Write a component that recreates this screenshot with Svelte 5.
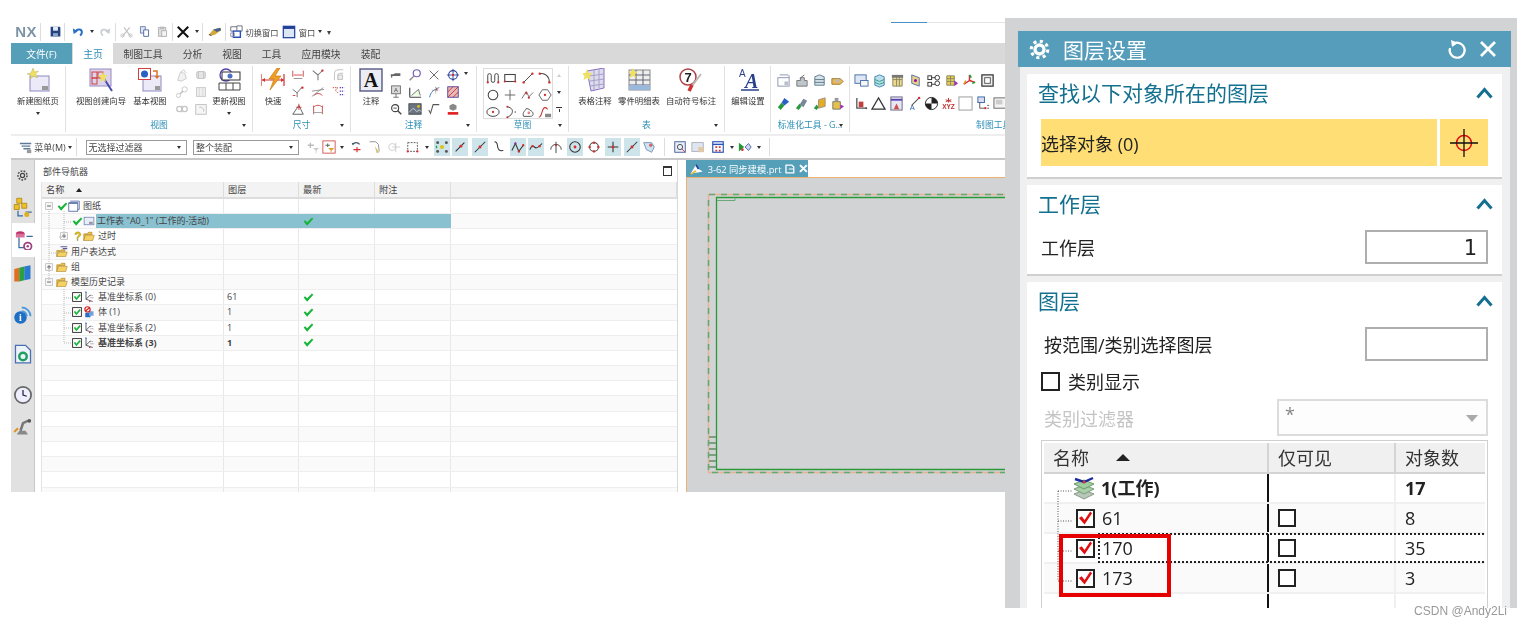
<script>
  // Small icons live on a 16 unit box, big ribbon icons on a 24 unit box
  const icons = {
    save: '<path d="M2 2h11l1 1v11H2z" fill="#24427e"/><rect x="5" y="2" width="6" height="5" fill="#e4eaf4"/><rect x="5" y="10" width="6" height="4" fill="#8fa6cc"/>',
    undo: '<path d="M4 8c3-4 9-3 8 2-.3 1-1 2-2 3" fill="none" stroke="#2a6fc4" stroke-width="2.4"/><path d="M1 4l1 7 5-3z" fill="#2a6fc4"/>',
    redo: '<path d="M12 8C9 4 3 5 4 10c.3 1 1 2 2 3" fill="none" stroke="#c4ccd0" stroke-width="2"/><path d="M15 4l-1 7-5-3z" fill="#c4ccd0"/>',
    cut: '<path d="M3 14L12 3M13 14L5 3" stroke="#c2c2c2" stroke-width="1.4" fill="none"/><circle cx="3" cy="13" r="2" fill="none" stroke="#bbb"/><circle cx="13" cy="13" r="2" fill="none" stroke="#bbb"/>',
    copy: '<path d="M3 2h6v8H3z" fill="#dfe6f5" stroke="#5a6fa8"/><path d="M7 6h6v8H7z" fill="#fff" stroke="#3d5596"/>',
    paste: '<path d="M3 3h9v11H3z" fill="#ddd" stroke="#aaa"/><path d="M7 7h6v7H7z" fill="#f4f4f4" stroke="#aaa"/><path d="M5 2h5v3H5z" fill="#bbb"/>',
    del: '<path d="M2 2l12 12M14 2L2 14" stroke="#111" stroke-width="2.4"/>',
    pen: '<path d="M1 11l5-6 8-2 1 3-7 5-4 1z" fill="#d4a93a"/><path d="M6 5l8-2 1 3-5 2z" fill="#46608f"/><path d="M1 11l3 1" stroke="#333"/>',
    swin: '<path d="M2 2h8v5H2z" fill="#fff" stroke="#667"/><path d="M9 1h6v6H9z" fill="#fff" stroke="#667"/><path d="M5 7h8v7H5z" fill="#fff" stroke="#2452b8" stroke-width="1.6"/><path d="M2 9h4v4H2z" fill="none" stroke="#889"/>',
    win: '<rect x="1.5" y="1.5" width="13" height="13" fill="#dbe7f5" stroke="#1f3f9a" stroke-width="1.4"/><rect x="1.5" y="1.5" width="13" height="3" fill="#1f3f9a"/>',
    menu: '<path d="M1 4h13M3 7h10M5 10h8" stroke="#5c7a9a" stroke-width="1.6"/><path d="M9 11h5v4H9z" fill="#999"/>',
    filt1: '<path d="M2 6h7M5 3v6" stroke="#bbb" stroke-width="1.5"/><path d="M8 9h7l-3 3v3h-1v-3z" fill="#ccc"/>',
    filt2: '<rect x="1" y="1" width="14" height="14" fill="#fff" stroke="#d04a4a"/><path d="M4 6h5M6.5 4v4" stroke="#666" stroke-width="1.2"/><path d="M7 9h7l-3 3v2h-1v-2z" fill="#e0a030"/>',
    t1: '<path d="M3 5a5 5 0 0 1 8 0" stroke="#456" fill="none" stroke-width="1.3"/><path d="M8 8v6M4 11h8" stroke="#d03030" stroke-width="1.3"/><path d="M2 3l1 3 2-2z" fill="#456"/>',
    t2: '<path d="M3 2h7l3 3 1 8" stroke="#888" fill="none"/><path d="M9 7l5 7-3 1z" fill="#d8c070"/>',
    t3: '<circle cx="6" cy="8" r="4" fill="none" stroke="#ccc"/><path d="M10 3v11M6 8h9" stroke="#ccc"/>',
    t4: '<rect x="2" y="3" width="11" height="10" fill="none" stroke="#444" stroke-dasharray="2 1.4"/><circle cx="2" cy="13" r="1.3" fill="#d03030"/><circle cx="13" cy="13" r="1.3" fill="#d03030"/>',
    dots: '<circle cx="8" cy="8" r="2.4" fill="#e0c020"/><circle cx="3" cy="3" r="1.7" fill="#555"/><circle cx="13" cy="3" r="1.7" fill="#555"/><circle cx="3" cy="13" r="1.7" fill="#555"/><circle cx="13" cy="13" r="1.7" fill="#555"/><path d="M1 6l2 2-2 2z" fill="#1a9a30"/>',
    line: '<path d="M3 13L13 3" stroke="#333" stroke-width="1.2"/><circle cx="9" cy="7" r="1.7" fill="#d03030"/>',
    lin2: '<path d="M2 14L14 2" stroke="#333" stroke-width="1.2"/><circle cx="8" cy="8" r="1.7" fill="#d03030"/>',
    curv: '<path d="M4 2c5 0 2 6 5 9 2 2 4 1 5 1" fill="none" stroke="#333" stroke-width="1.2"/>',
    wave: '<path d="M1 12L5 4l4 9 5-7" fill="none" stroke="#333" stroke-width="1.2"/><circle cx="5" cy="4" r="1.4" fill="#8a3ab0"/><circle cx="9" cy="13" r="1.4" fill="#d03030"/><circle cx="14" cy="6" r="1.3" fill="#d03030"/>',
    wav2: '<path d="M1 11c3-8 5-2 7-2s4-2 7-5" fill="none" stroke="#333" stroke-width="1.2"/><circle cx="4" cy="7" r="1.4" fill="#d03030"/><circle cx="12" cy="7" r="1.4" fill="#d03030"/>',
    umb: '<path d="M2 11a6 6 0 0 1 12 0M8 2v13" fill="none" stroke="#444" stroke-width="1.1"/><circle cx="8" cy="6" r="1.2" fill="#d03030"/>',
    rad: '<circle cx="8" cy="8" r="6" fill="none" stroke="#333" stroke-width="1.2"/><circle cx="8" cy="8" r="1.6" fill="#d03030"/>',
    ring: '<circle cx="8" cy="8" r="5" fill="none" stroke="#555" stroke-width="1.2"/><circle cx="8" cy="3" r="1.4" fill="#d03030"/><circle cx="3" cy="8" r="1.4" fill="#d03030"/><circle cx="13" cy="8" r="1.4" fill="#d03030"/><circle cx="8" cy="13" r="1.4" fill="#d03030"/>',
    plus: '<path d="M8 2v12M2 8h12" stroke="#333" stroke-width="1.2"/><circle cx="8" cy="8" r="1.6" fill="#d03030"/>',
    shap: '<path d="M2 3h9l3 5-3 6-6-3z" fill="#cfe3f2" stroke="#6b8fb0"/><circle cx="10" cy="6" r="2" fill="#d06a6a"/>',
    zoom: '<rect x="2" y="2" width="12" height="12" fill="#e8eef8" stroke="#3d5596"/><circle cx="8" cy="8" r="3" fill="none" stroke="#444"/><path d="M10 10l4 4" stroke="#d03030"/>',
    hand: '<rect x="1" y="3" width="13" height="10" fill="#dfe6f2" stroke="#aab"/><path d="M8 8h6v6H9z" fill="#e4c9a0"/>',
    grid: '<rect x="2" y="2" width="12" height="12" fill="#fff" stroke="#2452b8" stroke-width="1.3"/><path d="M2 5h12" stroke="#2452b8" stroke-width="1.6"/><path d="M5 7h2v2H5zM9 7h2v2H9zM5 11h2v2H5zM9 11h2v2H9z" fill="#d03030"/>',
    dia: '<path d="M8 8l4-4 3 4-3 4z" fill="#cdd6ee" stroke="#4a5fa8"/><path d="M1 3v10l6-5z" fill="#1a9a30"/><circle cx="5" cy="11" r="1.5" fill="#d03030"/>',

    g1: '<path d="M3 14l3-9 5 1 2 6-6 3z" fill="#f2f2f2" stroke="#c8c8c8"/><path d="M6 5l4-3 3 4" fill="none" stroke="#c8c8c8"/>',
    g2: '<rect x="3" y="4" width="10" height="8" rx="2" fill="#e4e4e4" stroke="#c0c0c0"/><path d="M5 4v8M11 4v8" stroke="#c0c0c0"/>',
    g3: '<circle cx="4" cy="12" r="2.4" fill="none" stroke="#c4c4c4"/><circle cx="11" cy="5" r="3" fill="none" stroke="#c4c4c4"/><path d="M6 10l3-3" stroke="#c4c4c4" stroke-width="2"/>',
    g4: '<rect x="3" y="3" width="10" height="10" fill="#f0f0f0" stroke="#c4c4c4"/><path d="M6 3v10M10 3v10" stroke="#d8d8d8"/>',
    g5: '<circle cx="5" cy="8" r="3" fill="none" stroke="#c4c4c4" stroke-width="1.4"/><circle cx="11" cy="8" r="3" fill="none" stroke="#c4c4c4" stroke-width="1.4"/><path d="M8 4v8" stroke="#c4c4c4"/>',
    g6: '<rect x="2" y="3" width="12" height="11" fill="#f6f6f6" stroke="#bbb"/><path d="M6 6a4 4 0 0 1 5 5" fill="none" stroke="#bbb"/>',

    d1: '<path d="M2 3v7M14 3v7M3 8h10" stroke="#c94040" fill="none"/><path d="M3 12h10" stroke="#8a8a8a"/>',
    d2: '<path d="M2 3l6 5v6M14 2L8 8" stroke="#777" fill="none" stroke-width="1.2"/><circle cx="13" cy="3" r="1.3" fill="#d03030"/>',
    d3: '<path d="M4 14V6a4 4 0 0 1 4-4h6M8 14V8a2 2 0 0 1 2-2h4" stroke="#bbb" fill="none"/><rect x="8" y="8" width="5" height="5" fill="#eee" stroke="#bbb"/>',
    d4: '<path d="M2 5l5 4v5M12 3L7 9" stroke="#666" fill="none"/><circle cx="13" cy="3" r="1.4" fill="#d03030"/><path d="M2 12h3" stroke="#d03030"/>',
    d5: '<path d="M1 7l14-2M1 13L14 3" stroke="#888" fill="none"/><path d="M4 12c2-3 6-3 9 0" stroke="#d03030" fill="none"/>',
    d6: '<path d="M2 3h6l-3 3 3 3" stroke="#d03030" fill="none" stroke-dasharray="1.6 1"/><path d="M10 3h5M10 7h5M10 11h5" stroke="#5a40b0" stroke-dasharray="1.4 1" stroke-width="1.4"/>',
    d7: '<path d="M2 14h12L9 4z" fill="none" stroke="#555"/><path d="M9 2v7M6 6h6" stroke="#d03030"/>',
    d8: '<path d="M3 14V4M13 14V4M3 6c3-3 7-3 10 0" stroke="#c94040" fill="none"/><path d="M3 12h10" stroke="#999"/>',

    n1: '<path d="M2 7h3l2-1h6v3H2z" fill="#666"/><path d="M3 9v2" stroke="#666" stroke-width="1.5"/>',
    n2: '<circle cx="10" cy="6" r="4" fill="#fff" stroke="#7b5fc0" stroke-width="1.4"/><path d="M7 9l-5 5" stroke="#888" stroke-width="1.6"/>',
    n3: '<path d="M3 3l10 10M13 3L3 13" stroke="#666" stroke-width="1.1"/>',
    n4: '<circle cx="8" cy="8" r="5" fill="none" stroke="#2a3f9a" stroke-width="1.2"/><path d="M8 1v14M1 8h14" stroke="#2a3f9a"/><circle cx="8" cy="8" r="1.3" fill="#d03030"/>',
    n5: '<rect x="3" y="1" width="10" height="9" fill="#ddd" stroke="#666"/><text x="8" y="8" font-size="7" text-anchor="middle" fill="#444">A</text><path d="M8 10v4M5 14h6" stroke="#666"/>',
    n6: '<path d="M2 14V3M2 14h13" stroke="#444" stroke-width="1.3"/><path d="M4 12l8-7 2 7" fill="#cfa" fill-opacity=".4" stroke="#666"/>',
    n7: '<path d="M3 14c1-6 5-9 11-11" stroke="#2a6fc4" fill="none"/><path d="M10 2v8M6 6h8" stroke="#888" stroke-dasharray="1.5 1"/><circle cx="11" cy="5" r="1" fill="#d03030"/>',
    n8: '<rect x="2" y="2" width="12" height="12" fill="#e9b8b8" stroke="#4a3f9a"/><path d="M2 8l6-6M2 14L14 2M8 14l6-6" stroke="#c03030"/>',
    n9: '<circle cx="7" cy="7" r="4" fill="none" stroke="#444" stroke-width="1.3"/><path d="M10 10l4 4" stroke="#444" stroke-width="1.6"/><path d="M5 7h4" stroke="#444"/>',
    n10: '<rect x="1" y="2" width="14" height="12" fill="#6b7480" stroke="#444"/><path d="M1 12l5-5 4 4 3-2 2 2" fill="none" stroke="#cdd"/><circle cx="12" cy="5" r="1.5" fill="#f0c020"/>',
    n11: '<path d="M2 9l2 4 3-10h7" fill="none" stroke="#555" stroke-width="1.2"/>',
    n12: '<path d="M4 4l4-2 4 2v4l-4 2-4-2z" fill="#888"/><path d="M2 13h12" stroke="#e02020" stroke-width="3"/>',

    s1: '<path d="M2 13V5a2 2 0 0 1 4 0v6a2 2 0 0 0 4 0V5a2 2 0 0 1 4 0v8" fill="none" stroke="#444" stroke-width="1.1"/><circle cx="2" cy="13" r="1.3" fill="#d03030"/><circle cx="14" cy="13" r="1.3" fill="#d03030"/>',
    s2: '<rect x="2" y="4" width="12" height="8" fill="none" stroke="#444" stroke-width="1.2"/><circle cx="2" cy="12" r="1.2" fill="#d03030"/><circle cx="14" cy="12" r="1.2" fill="#d03030"/>',
    s3: '<path d="M3 13L13 3" stroke="#444" stroke-width="1.1"/><circle cx="3" cy="13" r="1.4" fill="#d03030"/><circle cx="13" cy="3" r="1.4" fill="#d03030"/>',
    s4: '<path d="M2 3c6-1 11 3 11 10" fill="none" stroke="#444" stroke-width="1.2"/><circle cx="2" cy="3" r="1.4" fill="#d03030"/><circle cx="13" cy="13" r="1.4" fill="#d03030"/>',
    s5: '<circle cx="8" cy="8" r="5.5" fill="none" stroke="#444" stroke-width="1.2"/>',
    s6: '<path d="M8 2v12M2 8h12" stroke="#666" stroke-width="1.1"/>',
    s7: '<path d="M1 12l5-8 3 6 5-5" fill="none" stroke="#666"/><circle cx="6" cy="6" r="1.3" fill="#d03030"/><circle cx="9" cy="11" r="1.3" fill="#d03030"/>',
    s8: '<path d="M5 2h6l4 6-4 6H5L1 8z" fill="none" stroke="#555"/><circle cx="8" cy="8" r="1.3" fill="#d03030"/>',
    s9: '<ellipse cx="8" cy="8" rx="7" ry="5" fill="none" stroke="#444" stroke-width="1.1"/><circle cx="8" cy="8" r="1.3" fill="#d03030"/>',
    s10: '<path d="M5 2c5 1 7 4 5 8-1 2-3 3-5 4" fill="none" stroke="#444" stroke-width="1.1"/><circle cx="5" cy="2" r="1.2" fill="#d03030"/><circle cx="5" cy="14" r="1.2" fill="#d03030"/><circle cx="14" cy="8" r=".9" fill="#555"/>',
    s11: '<path d="M3 13c-2-5 2-6 3-9 3 0 4 2 6 3 3 2 2 6-1 6z" fill="none" stroke="#555" stroke-width="1.1"/><circle cx="9" cy="9" r="1.6" fill="#d88"/>',
    s12: '<path d="M1 14c4 0 3-11 7-11 2 0 2 1 3 2" fill="none" stroke="#c03030" stroke-width="1.2"/><path d="M8 10h7v4H8z" fill="#888"/>',

    b1: '<rect x="2" y="5" width="12" height="9" fill="#fff" stroke="#8a93b0"/><path d="M4 2h9l1 1v2" fill="none" stroke="#8a93b0"/><path d="M9 9h4v4H9z" fill="#bbc"/>',
    b2: '<path d="M3 8h4V5h4v3h3v6H3z" fill="#bfc6cc" stroke="#777"/><path d="M6 6l5-4" stroke="#666"/>',
    b3: '<path d="M3 4l5-2 5 2v9H3z" fill="#d8e2ea" stroke="#5a7a88"/><path d="M3 7h10M3 10h10" stroke="#5a7a88"/>',
    b4: '<rect x="3" y="2" width="10" height="12" fill="#d8d8f0" stroke="#5a7a88"/><path d="M3 6h10M3 10h10" stroke="#3aa0a0"/>',
    b5: '<path d="M2 6h9l3 3-3 3H2z" fill="#e6b85c" stroke="#a07c2c"/><circle cx="8" cy="8" r="2" fill="#bbb"/>',
    b6: '<path d="M2 12l4-5 3 3-4 5z" fill="#2a9a40"/><path d="M6 7l3-5 5 4-5 4z" fill="#2a5fc4"/>',
    b7: '<path d="M2 13l4-5 2 3-3 4z" fill="#2a9a40"/><path d="M6 9l4-6 4 2-4 7z" fill="#789"/>',
    b8: '<path d="M2 13l3-4 2 3-2 3z" fill="#2a9a40"/><path d="M7 4l7-2v9l-7 2z" fill="#e0b020" stroke="#a88"/>',
    b9: '<path d="M3 6h8v8H3z" fill="#e6c04c" stroke="#776"/><path d="M5 2h4v4H5z" fill="#999"/><path d="M11 9l4 2-4 3z" fill="#a030c0"/>',
    c1: '<rect x="1" y="2" width="12" height="9" fill="#dde7f5" stroke="#4a6fa8"/><rect x="7" y="8" width="8" height="6" fill="#f6f6f6" stroke="#4a6fa8"/>',
    c2: '<path d="M3 4l5-2 5 2v9l-5 2-5-2z" fill="#bde" stroke="#48a"/><path d="M3 7l5 2 5-2M3 10l5 2 5-2" fill="none" stroke="#2a9a80"/>',
    c3: '<path d="M3 3h10v11H3z" fill="#eed98a" stroke="#886"/><path d="M3 7h10M7 3v11M10 3v11" stroke="#886"/><path d="M2 2h12v3H2z" fill="#777"/>',
    c4: '<path d="M4 2l8 3v9L4 11z" fill="#e0d488" stroke="#5a6fa8"/><circle cx="8" cy="8" r="1.6" fill="#a0a"/>',
    c5: '<rect x="2" y="3" width="4" height="4" fill="none" stroke="#333"/><rect x="2" y="10" width="4" height="4" fill="none" stroke="#333"/><circle cx="12" cy="5" r="2.5" fill="none" stroke="#333"/><circle cx="12" cy="11" r="2.5" fill="none" stroke="#333"/><path d="M6 5h4M6 12h4" stroke="#333"/>',
    c6: '<path d="M3 3h8v10H3z" fill="#e8cc50" stroke="#886"/><path d="M3 6h8M3 9h8M7 3v10" stroke="#886"/><path d="M11 8l4 3-4 3z" fill="#a030c0"/>',
    c7: '<path d="M8 8V2M8 8l6 2M8 8L2 12" stroke="#d03030" stroke-width="1.6"/><path d="M8 2l2 3M14 10l-3 1" stroke="#1a9a30" stroke-width="1.6"/><path d="M2 12l2-4" stroke="#e09020" stroke-width="1.6"/>',
    c8: '<rect x="2" y="2" width="12" height="12" fill="#eee" stroke="#333" stroke-width="1.3"/><rect x="5" y="5" width="6" height="6" fill="#fff" stroke="#555"/>',
    c9: '<path d="M3 2v11h11" stroke="#555" fill="none" stroke-width="1.4"/><rect x="5" y="6" width="5" height="6" fill="#c04040"/><circle cx="13" cy="13" r="1" fill="#555"/>',
    c10: '<path d="M8 2l7 12H1z" fill="none" stroke="#333" stroke-width="1.3"/>',
    c11: '<rect x="2" y="1" width="12" height="14" fill="#e8e8f2" stroke="#668"/><path d="M2 4h12" stroke="#5a40b0" stroke-width="2"/><path d="M5 14l3-6 3 6z" fill="#d05050"/>',
    c12: '<path d="M6 10l8-8" stroke="#555" stroke-width="1.2"/><circle cx="14" cy="2" r="1.3" fill="#d03030"/><text x="4" y="15" font-size="8" fill="#36a" font-family="Liberation Sans">A</text>',
    c13: '<circle cx="8" cy="8" r="6.5" fill="#fff" stroke="#222"/><path d="M8 1.5A6.500 6.500 0 0 1 14.500 8H8zM8 8v6.500A6.500 6.500 0 0 1 1.500 8z" fill="#222"/>',
    c14: '<text x="8" y="14" font-size="7" font-weight="700" text-anchor="middle" fill="#c03030" font-family="Liberation Sans">XYZ</text><path d="M8 2v5M5 4l6 2M11 4L5 6" stroke="#c03030"/>',
    c15: '<rect x="1" y="1" width="14" height="14" fill="#fff" stroke="#999"/>',
    c16: '<rect x="2" y="1" width="7" height="6" fill="#dde" stroke="#36a"/><path d="M4 7v6h6M12 10h2M12 13h2" stroke="#555" fill="none"/><circle cx="10" cy="13" r="1.2" fill="#d03030"/>',
    c17: '<rect x="1" y="2" width="14" height="11" fill="#f4f4f4" stroke="#666"/><rect x="3" y="4" width="7" height="5" fill="#ccc"/>',

    exOpen: '<rect x="3.500" y="3.500" width="9" height="9" fill="#f6f6f6" stroke="#bbb"/><path d="M5.500 8h5" stroke="#333"/>',
    exClosed: '<rect x="3.500" y="3.500" width="9" height="9" fill="#f6f6f6" stroke="#bbb"/><path d="M5.500 8h5M8 5.500v5" stroke="#333"/>',
    ok: '<path d="M1 8l2-2 3 3 7-7 2 2-9 10z" fill="#18b53a"/>',
    quest: '<path d="M4 5c0-5 9-5 9 0 0 3-4 3-4 6H7c0-4 3-4 3-6 0-2-3-2-3 0z" fill="#e0c020" stroke="#8a7a10" stroke-width=".5"/><rect x="7" y="12" width="2" height="2" fill="#8a7a10"/>',
    sheet: '<rect x="1" y="4" width="12" height="11" fill="#fff" stroke="#5a6fa8" stroke-width="1.2"/><path d="M3 1.500h12v11h-2" fill="none" stroke="#5a6fa8" stroke-width="1.2"/><path d="M1 4h12" stroke="#5a6fa8" stroke-width="2"/>',
    page: '<rect x="1.500" y="3" width="13" height="10" fill="#e8edf8" stroke="#6b7fb0"/><rect x="8" y="9" width="5" height="3" fill="#99a"/>',
    folder: '<path d="M1 5h5l1-2h5v3H4L1 14z" fill="#f0c040" stroke="#a07820" stroke-width=".7"/><path d="M3 7h12l-2 7H1z" fill="#f6d060" stroke="#a07820" stroke-width=".7"/>',
    folderE: '<path d="M6 1h9M9 3.500h6" stroke="#5a5aa0" stroke-width="1.4"/><path d="M1 6h5l1-1h5v2H4L1 14z" fill="#f0c040" stroke="#a07820" stroke-width=".7"/><path d="M3 8h12l-2 6H1z" fill="#f6d060" stroke="#a07820" stroke-width=".7"/>',
    chk: '<rect x="1" y="1" width="14" height="14" fill="#fff" stroke="#222" stroke-width="1.4"/><path d="M3 8l2-2 2 3 5-6 2 2-7 8z" fill="#18b53a"/>',
    csys: '<path d="M4 2v9l9 3M4 11l6-6" stroke="#445" fill="none" stroke-width="1.1"/><path d="M9 6h4M10 9h4" stroke="#667" stroke-dasharray="1.4 1"/><circle cx="9" cy="14" r="1" fill="#d03030"/><path d="M3 1l2 1" stroke="#2a6fc4" stroke-width="1.4"/>',
    body: '<path d="M3 9h7v6H3z" fill="#2a6fc4"/><path d="M8 7h6v6H8z" fill="#6fa0dc"/><circle cx="6" cy="4.500" r="3.500" fill="#fff" stroke="#d02020" stroke-width="1.6"/><path d="M3 7l6-5" stroke="#d02020" stroke-width="1.6"/>',

    r1: '<circle cx="8" cy="8" r="2.500" fill="none" stroke="#444" stroke-width="1.5"/><circle cx="8" cy="8" r="5.500" fill="none" stroke="#555" stroke-width="2" stroke-dasharray="2.200 1.600"/>',
    r2: '<path d="M3 1h4v4H3zM7 5h4v4H7zM1 6h4v4H1z" fill="#f0c020" stroke="#a88010" stroke-width=".6"/><path d="M4 11v4h4M10 12h5" stroke="#3a6aa0" fill="none"/><circle cx="11" cy="14" r="2" fill="#e0b020"/>',
    r3: '<ellipse cx="5" cy="3" rx="3.500" ry="2" fill="#c0306a"/><rect x="1.500" y="3" width="7" height="3" fill="#d8709a"/><path d="M4 6v8h4M10 5h5" stroke="#3a6aa0" fill="none"/><circle cx="11" cy="13" r="3" fill="none" stroke="#a04080" stroke-width="1.400"/><circle cx="11" cy="13" r="1" fill="#a04080"/>',
    r4: '<path d="M1 4l4-1v11H1z" fill="#e07020"/><path d="M5 3l4-1v11l-4 1z" fill="#2aa040"/><path d="M9 2l5-1v11l-5 1z" fill="#2a7ad0"/>',
    r5: '<circle cx="6" cy="10" r="5" fill="#1f6fc4"/><text x="6" y="13" font-size="8" font-weight="700" text-anchor="middle" fill="#fff" font-family="Liberation Serif">i</text><path d="M7 2a7 7 0 0 1 7 7M7 5a4 4 0 0 1 4 4" fill="none" stroke="#4a9ae0" stroke-width="1.500"/>',
    r6: '<path d="M2 1h8l4 4v10H2z" fill="#eef3fb" stroke="#4a6fb0"/><circle cx="8" cy="10" r="3" fill="none" stroke="#20a060" stroke-width="2"/>',
    r7: '<circle cx="8" cy="8" r="6.500" fill="#eef" stroke="#666" stroke-width="1.400"/><path d="M8 4v4l3 1" stroke="#223" fill="none"/>',
    r8: '<path d="M3 14l2-3h5l2 3z" fill="#888"/><path d="M6 11l2-6 4-2" stroke="#777" stroke-width="2" fill="none"/><circle cx="13" cy="3" r="1.500" fill="#555"/><path d="M1 12l3-3" stroke="#e09020" stroke-width="1.500"/>'
  };

  const bigIcons = {
    sheetNew: '<rect x="4" y="8" width="19" height="15" fill="#eceaf8" stroke="#8a8ac0"/><rect x="16" y="18" width="6" height="4" fill="#999"/><path d="M7 0l1.500 4 4-1-3 3 2 4-4-2-3 3 .5-4-4-1 4-1z" fill="#f0e060" stroke="#b8b060" stroke-width=".5"/>',
    wizard: '<rect x="1" y="1" width="21" height="17" fill="#dcd4ec" stroke="#9a8ac0"/><rect x="3" y="4" width="5" height="6" fill="none" stroke="#d04040"/><rect x="3" y="10" width="5" height="6" fill="none" stroke="#d04040"/><rect x="9" y="4" width="5" height="6" fill="none" stroke="#d04040"/><path d="M14 9l9 14" stroke="#4a4ab0" stroke-width="2"/><path d="M14 3l1 4 4 0-3 3 1 4-3-2-3 2 1-4-3-3 4 0z" fill="#f0e060"/>',
    basic: '<rect x="5" y="8" width="18" height="15" fill="#eceaf8" stroke="#8a8ac0"/><rect x="17" y="18" width="5" height="4" fill="#999"/><rect x="0.500" y="0.500" width="12" height="11" fill="#fff" stroke="#d04040"/><circle cx="6.500" cy="6" r="3.500" fill="#2a5fc4"/><path d="M15 3h4v5" fill="none" stroke="#e07020" stroke-width="1.500"/><path d="M16.500 8h5l-2.500 3z" fill="#e07020"/>',
    update: '<circle cx="9" cy="7" r="6" fill="none" stroke="#5040b0" stroke-width="1.300"/><rect x="5" y="4" width="18" height="8" fill="#fff" stroke="#333"/><circle cx="13" cy="8" r="2.500" fill="#4a6fc4"/><path d="M2 15h21v7H2zM9 15v7M16 15v7" fill="#fff" stroke="#444"/>',
    quick: '<path d="M0 6v12M23 6v12M1 12h22" stroke="#d03030" stroke-width="1.200"/><path d="M1 12l3-2v4zM23 12l-3-2v4z" fill="#d03030"/><path d="M16 0l-8 11h5l-4 11 11-14h-6l5-8z" fill="#f0a020" stroke="#c07010" stroke-width=".6"/>',
    tblNote: '<path d="M4 3l17-3v20l-13 3z" fill="#dcdcec" stroke="#8a70c0"/><path d="M6 8l15-2M7 13l14-2M7 18l14-2M11 2v20M16 1v19" stroke="#a8a0c8"/><path d="M4 1l1.500 4 4 0-3 3 1 4-3.500-2-3.500 2 1-4-3-3 4 0z" fill="#f0e060"/>',
    parts: '<rect x="2" y="2" width="21" height="20" fill="#eee" stroke="#888"/><path d="M2 7h21M2 12h21M2 17h21M9 2v20M16 2v20" stroke="#667"/><rect x="2" y="17" width="21" height="5" fill="#9ab8dc"/><path d="M6 0l1.500 3.500h3.500l-3 2.500 1 4-3-2-3 2 1-4-3-2.500h3.500z" fill="#f0e060"/>',
    auto: '<circle cx="9" cy="9" r="8" fill="#fff" stroke="#b04040" stroke-width="1.500"/><text x="9" y="14" font-size="13" font-weight="700" text-anchor="middle" fill="#222" font-family="Liberation Sans">7</text><path d="M22 6l-9 12" stroke="#bbb" stroke-width="2"/><path d="M13 17l-3 6" stroke="#d03030" stroke-width="3.500"/>',
    edit: '<text x="3" y="9" font-size="10" fill="#2a3f8a" font-family="Liberation Sans">A</text><text x="9" y="20" font-size="20" font-weight="700" font-style="italic" fill="#2a3f8a" font-family="Liberation Serif">A</text><path d="M5 22h18" stroke="#2a3f8a" stroke-width="1.500"/>',
    note: '<rect x="1" y="1" width="22" height="22" fill="#ececf4" stroke="#555a80" stroke-width="1.400"/><text x="12" y="19" font-size="20" font-weight="700" text-anchor="middle" fill="#111" font-family="Liberation Serif">A</text>'
  };

  // Lays items out in flow: each one gets the margin that puts its centre at c
  function strip(items, start) {
    let x = start;
    return items.map((it) => {
      const w = it.w ?? (it.sep ? 1 : it.arrow ? 6 : 16);
      const gap = it.c - w / 2 - x;
      x = it.c + w / 2;
      return { ...it, w, gap };
    });
  }

  const quickBar = strip([
    { c: 26, label: 'NX', nx: true, w: 26 }, { c: 40, sep: true },
    { c: 55, i: 'save', s: 13 }, { c: 64, sep: true },
    { c: 78, i: 'undo', s: 13 }, { c: 92, arrow: true }, { c: 104, i: 'redo', s: 13 }, { c: 115, sep: true },
    { c: 126, i: 'cut', s: 13 }, { c: 144, i: 'copy', s: 13 }, { c: 162, i: 'paste', s: 13 }, { c: 172, sep: true },
    { c: 183, i: 'del', s: 14 }, { c: 197, arrow: true }, { c: 202, sep: true },
    { c: 215, i: 'pen', s: 14 }, { c: 225, sep: true },
    { c: 236, i: 'swin', s: 14 }, { c: 262, label: '切换窗口', w: 34 },
    { c: 289, i: 'win', s: 14 }, { c: 307, label: '窗口', w: 17 }, { c: 320, arrow: true }, { c: 329, label: '▾', w: 6 }
  ], 11);

  const cmdBar = strip([
    { c: 26, i: 'menu' }, { c: 50, label: '菜单(M)', w: 30 }, { c: 70, arrow: true }, { c: 76, sep: true },
    { c: 136, select: '无选择过滤器', w: 101 }, { c: 246, select: '整个装配', w: 106 },
    { c: 313, i: 'filt1' }, { c: 329, i: 'filt2' }, { c: 342, arrow: true },
    { c: 357, i: 't1' }, { c: 374, i: 't2' }, { c: 394, i: 't3' }, { c: 413, i: 't4' }, { c: 427, arrow: true },
    { c: 442, i: 'dots', hl: 1 }, { c: 460, i: 'line', hl: 1 }, { c: 480, i: 'lin2', hl: 1 }, { c: 498, i: 'curv' },
    { c: 518, i: 'wave', hl: 1 }, { c: 536, i: 'wav2', hl: 1 }, { c: 556, i: 'umb' },
    { c: 575, i: 'rad', hl: 1 }, { c: 594, i: 'ring' }, { c: 613, i: 'plus', hl: 1 }, { c: 632, i: 'lin2', hl: 1 },
    { c: 649, i: 'shap' }, { c: 664, sep: true }, { c: 680, i: 'zoom' }, { c: 698, i: 'hand' },
    { c: 718, i: 'grid' }, { c: 732, arrow: true }, { c: 745, i: 'dia' }, { c: 759, arrow: true }, { c: 769, sep: true }
  ], 11);

  const viewSmall = ['g1', 'g2', 'g3', 'g4', 'g5', 'g6'];
  const dimSmall = ['d1', 'd2', 'd3', 'd4', 'd5', 'd6', 'd7', 'd8'];
  const noteSmall = ['n1', 'n2', 'n3', 'n4', 'n5', 'n6', 'n7', 'n8', 'n9', 'n10', 'n11', 'n12'];
  const sketchSmall = ['s1', 's2', 's3', 's4', 's5', 's6', 's7', 's8', 's9', 's10', 's11', 's12'];
  const stdSmall = ['b1', 'b2', 'b3', 'b5', 'b6', 'b7', 'b8', 'b9'];
  const draftTop = ['c1', 'c2', 'c3', 'c4', 'c5', 'c6', 'c7', 'c8'];
  const draftBottom = ['c9', 'c10', 'c11', 'c12', 'c13', 'c14', 'c15', 'c16', 'c17'];

  const railItems = [
    { i: 'r2', h: 32, y: 0 }, { i: 'r3', h: 34, active: true }, { i: 'r4', h: 33 },
    { i: 'r5', h: 50 }, { i: 'r6', h: 28 }, { i: 'r7', h: 54 }, { i: 'r8', h: 10 }
  ];

  const treeRows = [
    { parts: [{ c: 48, i: 'exOpen', w: 12 }, { c: 61, i: 'ok', w: 11 }, { c: 73, i: 'sheet', w: 12 }], x: 82, label: '图纸' },
    { parts: [{ c: 76, i: 'ok', w: 11 }, { c: 88, i: 'page', w: 12 }], x: 96, label: '工作表 "A0_1" (工作的-活动)', sel: true, latest: true },
    { parts: [{ c: 63, i: 'exClosed', w: 12 }, { c: 76, i: 'quest', w: 11 }, { c: 88, i: 'folder', w: 12 }], x: 97, label: '过时' },
    { parts: [{ c: 61, i: 'folderE', w: 12 }], x: 70, label: '用户表达式' },
    { parts: [{ c: 48, i: 'exClosed', w: 12 }, { c: 61, i: 'folder', w: 12 }], x: 70, label: '组' },
    { parts: [{ c: 48, i: 'exOpen', w: 12 }, { c: 61, i: 'folder', w: 12 }], x: 70, label: '模型历史记录' },
    { parts: [{ c: 76, i: 'chk', w: 10 }, { c: 88, i: 'csys', w: 12 }], x: 97, label: '基准坐标系 (0)', layer: '61', latest: true },
    { parts: [{ c: 76, i: 'chk', w: 10 }, { c: 88, i: 'body', w: 12 }], x: 97, label: '体 (1)', layer: '1', latest: true },
    { parts: [{ c: 76, i: 'chk', w: 10 }, { c: 88, i: 'csys', w: 12 }], x: 97, label: '基准坐标系 (2)', layer: '1', latest: true },
    { parts: [{ c: 76, i: 'chk', w: 10 }, { c: 88, i: 'csys', w: 12 }], x: 97, label: '基准坐标系 (3)', layer: '1', latest: true, bold: true }
  ].map((r) => {
    const parts = strip(r.parts, 41);
    const last = parts[parts.length - 1];
    return { ...r, parts, textGap: r.x - (last.c + last.w / 2) };
  });
  const emptyRows = Array.from({ length: 10 });

  const layers = [
    { name: '61', count: '8' },
    { name: '170', count: '35' },
    { name: '173', count: '3' }
  ];
</script>

{#snippet ico(name, size = 16)}
  <svg class="ico" width={size} height={size} viewBox="0 0 16 16" aria-hidden="true">{@html icons[name]}</svg>
{/snippet}

{#snippet big(name)}
  <svg class="ico" width="24" height="24" viewBox="0 0 24 24" aria-hidden="true">{@html bigIcons[name]}</svg>
{/snippet}

{#snippet bigBtn(name, label, cls, caret = false)}
  <div class="big {cls}">
    {@render big(name)}
    <span class="big-label">{label}</span>
    {#if caret}<span class="caret"></span>{/if}
  </div>
{/snippet}

{#snippet foot(label, arrow = true)}
  <div class="g-foot"><span>{label}</span>{#if arrow}<span class="caret g-caret"></span>{/if}</div>
{/snippet}

{#snippet stripItems(items)}
  {#each items as it}
    <div class="cell" class:hl={it.hl} class:sep={it.sep} style="margin-left:{it.gap}px;width:{it.w}px">
      {#if it.i}{@render ico(it.i, it.s ?? 14)}
      {:else if it.arrow}<span class="caret"></span>
      {:else if it.select}<div class="sel-box"><span>{it.select}</span><span class="caret"></span></div>
      {:else if it.label}<span class:nx-logo={it.nx}>{it.label}</span>{/if}
    </div>
  {/each}
{/snippet}

<div class="page">
  <!-- NX window on the left -->
  <section class="nx">
    <div class="quick">
      {@render stripItems(quickBar)}
      <div class="top-line"></div>
    </div>

    <div class="tabs">
      <div class="tab-file">文件(F)</div>
      <div class="tab-home">主页</div>
      <div class="tab tab-w1">制图工具</div>
      <div class="tab">分析</div>
      <div class="tab">视图</div>
      <div class="tab">工具</div>
      <div class="tab tab-w1">应用模块</div>
      <div class="tab">装配</div>
    </div>

    <div class="ribbon">
      <div class="group g0">
        <div class="g-body">{@render bigBtn('sheetNew', '新建图纸页', 'w-new', true)}</div>
        {@render foot('', false)}
      </div>
      <div class="group g1">
        <div class="g-body">
          {@render bigBtn('wizard', '视图创建向导', 'w-wizard')}
          {@render bigBtn('basic', '基本视图', 'w-basic')}
          <div class="small cols2">{#each viewSmall as n}<div>{@render ico(n, 14)}</div>{/each}</div>
          {@render bigBtn('update', '更新视图', 'w-update', true)}
        </div>
        {@render foot('视图')}
      </div>
      <div class="group g2">
        <div class="g-body">
          {@render bigBtn('quick', '快速', 'w-quick')}
          <div class="small cols3">{#each dimSmall as n}<div>{@render ico(n, 14)}</div>{/each}</div>
        </div>
        {@render foot('尺寸')}
      </div>
      <div class="group g3">
        <div class="g-body">
          {@render bigBtn('note', '注释', 'w-quick')}
          <div class="small cols4">{#each noteSmall as n}<div>{@render ico(n, 14)}</div>{/each}</div>
          <span class="caret note-caret"></span>
        </div>
        {@render foot('注释')}
      </div>
      <div class="group g4">
        <div class="g-body">
          <div class="sketch small cols4s">{#each sketchSmall as n}<div>{@render ico(n, 14)}</div>{/each}</div>
          <div class="scroller"><span class="up"></span><span class="caret"></span><span class="more"></span></div>
        </div>
        {@render foot('草图')}
      </div>
      <div class="group g5">
        <div class="g-body">
          {@render bigBtn('tblNote', '表格注释', 'w-tbl')}
          {@render bigBtn('parts', '零件明细表', 'w-parts')}
          {@render bigBtn('auto', '自动符号标注', 'w-auto')}
        </div>
        {@render foot('表')}
      </div>
      <div class="group g6">
        <div class="g-body">{@render bigBtn('edit', '编辑设置', 'w-edit')}</div>
        {@render foot('', false)}
      </div>
      <div class="group g7">
        <div class="g-body">
          <div class="small wide std">{#each stdSmall as n}<div>{@render ico(n, 15)}</div>{/each}</div>
        </div>
        {@render foot('标准化工具 - G...')}
      </div>
      <div class="group g8">
        <div class="g-body draft">
          <div class="draft-row">{#each draftTop as n}<div>{@render ico(n, 15)}</div>{/each}</div>
          <div class="draft-row tight">{#each draftBottom as n}<div>{@render ico(n, 15)}</div>{/each}</div>
        </div>
        <div class="g-foot draft-foot"><span>制图工具 - GC工具箱</span></div>
      </div>
    </div>

    <div class="cmdbar">{@render stripItems(cmdBar)}</div>

    <div class="work">
      <aside class="rail">
        <div class="rail-gear">{@render ico('r1', 13)}</div>
        {#each railItems as r}
          <div class="rail-item" class:active={r.active} style="height:{r.h}px">{@render ico(r.i, 20)}</div>
        {/each}
      </aside>

      <div class="nav">
        <div class="nav-title"><span>部件导航器</span><span class="max-box"></span></div>
        <div class="nav-table">
          <div class="nav-row nav-head">
            <div class="nc name-head"><span>名称</span><span class="sort"></span></div>
            <div class="nc">图层</div>
            <div class="nc">最新</div>
            <div class="nc">附注</div>
            <div class="nc last"></div>
          </div>
          <div class="nav-body">
            {#each treeRows as r}
              <div class="nav-row" class:bold={r.bold}>
                <div class="nc tree-cell">
                  {#each r.parts as p}
                    <span class="part" style="margin-left:{p.gap}px;width:{p.w}px">{@render ico(p.i, p.w)}</span>
                  {/each}
                  {#if r.sel}<span class="tree-sel" style="margin-left:{r.textGap - 1}px">{r.label}</span>
                  {:else}<span style="margin-left:{r.textGap}px">{r.label}</span>{/if}
                </div>
                <div class="nc" class:selbg={r.sel}>{r.layer ?? ''}</div>
                <div class="nc ok-cell" class:selbg={r.sel}>{#if r.latest}{@render ico('ok', 11)}{/if}</div>
                <div class="nc" class:selbg={r.sel}></div>
                <div class="nc last"></div>
              </div>
            {/each}
            {#each emptyRows as _}
              <div class="nav-row">
                <div class="nc"></div><div class="nc"></div><div class="nc"></div><div class="nc"></div><div class="nc last"></div>
              </div>
            {/each}
            <!-- tree connector lines sit over the rows -->
            <svg class="tree-lines" width="70" height="160" aria-hidden="true">
              <path d="M7 12V84M7 54H16M22 12V38M22 23H30M22 38H16M22 90V144M22 99H30M22 114H30M22 129H30M22 144H30" fill="none" stroke="#bbb" stroke-dasharray="1 1"/>
            </svg>
          </div>
        </div>
      </div>

      <div class="view">
        <div class="view-tabs">
          <div class="view-tab">
            <svg width="14" height="14" viewBox="0 0 16 16" aria-hidden="true"><path d="M1 13l6-10 3 5 5 3-6 1z" fill="#fff"/><path d="M1 14l6-4" stroke="#e8c040" stroke-width="2"/><path d="M7 3l3 5" stroke="#2a3f9a" stroke-width="2"/></svg>
            <span>3-62 同步建模.prt</span>
            <svg width="10" height="10" viewBox="0 0 10 10" aria-hidden="true"><path d="M1 1h6l2 2v6H1z" fill="none" stroke="#fff" stroke-width="1.300"/><path d="M4 5h5" stroke="#fff"/></svg>
            <svg width="9" height="9" viewBox="0 0 9 9" aria-hidden="true"><path d="M1 1l7 7M8 1L1 8" stroke="#fff" stroke-width="2"/></svg>
          </div>
        </div>
        <div class="canvas">
          <svg class="sheet-drawing" width="318" height="315" viewBox="0 0 318 315" aria-hidden="true">
            <path d="M340 16.500H21.500V294.500H340" fill="none" stroke="#e6b296" stroke-width="1.500"/>
            <path d="M340 16.500H21.500V294.500H340" fill="none" stroke="#62a878" stroke-width="1.500" stroke-dasharray="6 6"/>
            <path d="M340 19.500H29.500V291.500H340" fill="none" stroke="#2a9a37" stroke-width="1.300"/>
            <path d="M30 22.500H48V19.500" fill="none" stroke="#6da87a"/>
            <path d="M22 259h7M22 265h7M22 271h7M22 277h7M22 283h7M22 289h7" stroke="#7aa080" stroke-width="2"/>
          </svg>
        </div>
      </div>
    </div>
  </section>

  <!-- Layer settings dialog on the right -->
  <section class="dialog">
    <header class="dlg-title">
      <svg width="21" height="21" viewBox="0 0 16 16" aria-hidden="true">
        <circle cx="8" cy="8" r="3.400" fill="none" stroke="#fff" stroke-width="2.600"/>
        <circle cx="8" cy="8" r="6.300" fill="none" stroke="#fff" stroke-width="2.400" stroke-dasharray="2.400 2.550"/>
      </svg>
      <h1>图层设置</h1>
      <svg class="reset" width="20" height="20" viewBox="0 0 20 20" aria-hidden="true">
        <path d="M6 5a7.500 7.500 0 1 1-3 4" fill="none" stroke="#fff" stroke-width="2.200"/>
        <path d="M4 1l7 3-6 4z" fill="#fff"/>
      </svg>
      <svg width="18" height="18" viewBox="0 0 18 18" aria-hidden="true"><path d="M2 2l14 14M16 2L2 16" stroke="#fff" stroke-width="2.800"/></svg>
    </header>

    <div class="dlg-body">
      <div class="sec sec-find">
        <div class="sec-head">
          <h2>查找以下对象所在的图层</h2>
          <svg class="chev" width="17" height="12" viewBox="0 0 17 12" aria-hidden="true"><path d="M1.500 10.500L8.500 2.500l7 8" fill="none" stroke="#14708f" stroke-width="3"/></svg>
        </div>
        <div class="pick">
          <div class="pick-label">选择对象 (0)</div>
          <div class="pick-btn">
            <svg width="30" height="30" viewBox="0 0 30 30" aria-hidden="true">
              <circle cx="15" cy="15" r="7.500" fill="none" stroke="#e01010" stroke-width="1.600"/>
              <path d="M15 1v28M1 15h28" stroke="#111" stroke-width="1.300"/>
            </svg>
          </div>
        </div>
      </div>

      <div class="sec sec-work">
        <div class="sec-head">
          <h2>工作层</h2>
          <svg class="chev" width="17" height="12" viewBox="0 0 17 12" aria-hidden="true"><path d="M1.500 10.500L8.500 2.500l7 8" fill="none" stroke="#14708f" stroke-width="3"/></svg>
        </div>
        <div class="field">
          <label for="work-layer">工作层</label>
          <input id="work-layer" class="num" value="1" readonly />
        </div>
      </div>

      <div class="sec sec-layers">
        <div class="sec-head">
          <h2>图层</h2>
          <svg class="chev" width="17" height="12" viewBox="0 0 17 12" aria-hidden="true"><path d="M1.500 10.500L8.500 2.500l7 8" fill="none" stroke="#14708f" stroke-width="3"/></svg>
        </div>
        <div class="field">
          <label class="indent" for="range">按范围/类别选择图层</label>
          <input id="range" class="num" readonly />
        </div>
        <div class="check-row"><span class="box"></span><span>类别显示</span></div>
        <div class="filter-row">
          <span class="indent muted">类别过滤器</span>
          <div class="combo"><span class="star">*</span><span class="combo-arrow"></span></div>
        </div>

        <div class="grid-frame">
          <div class="lrow lhead">
            <div class="lc name"><span>名称</span><span class="sort lg"></span></div>
            <div class="lc">仅可见</div>
            <div class="lc">对象数</div>
          </div>
          <div class="lbody">
            <div class="lrow">
              <div class="lc name work-name">
                <svg width="24" height="24" viewBox="0 0 24 24" aria-hidden="true">
                  <path d="M12 14l10 4-10 5-10-5z" fill="#b8c8b8" stroke="#8a9a8a"/>
                  <path d="M12 9l10 4-10 5-10-5z" fill="#a8cfa8" stroke="#7a9a7a"/>
                  <path d="M12 4l10 4-10 5-10-5z" fill="#9ecf9e" stroke="#6a9a6a"/>
                  <path d="M3 3l9 3 9-4" fill="none" stroke="#1a2aa0" stroke-width="2.400"/>
                  <circle cx="12" cy="6" r="1.500" fill="#e03030"/>
                </svg>
                <b>1(工作)</b>
              </div>
              <div class="lc"></div>
              <div class="lc"><b>17</b></div>
            </div>
            {#each layers as l}
              <div class="lrow">
                <div class="lc name layer-name">
                  <span class="box checked">
                    <svg width="16" height="16" viewBox="0 0 16 16" aria-hidden="true"><path d="M1 8l3-2 3 4 6-9 2 2-8 12z" fill="#e01010"/></svg>
                  </span>
                  <span>{l.name}</span>
                </div>
                <div class="lc"><span class="box small-box"></span></div>
                <div class="lc">{l.count}</div>
              </div>
            {/each}
            <div class="lrow">
              <div class="lc name"></div><div class="lc"></div><div class="lc"></div>
            </div>
            <svg class="layer-lines" width="50" height="120" aria-hidden="true">
              <path d="M14 17V107M14 17H28M14 47H28M14 77H28M14 107H28" fill="none" stroke="#555" stroke-dasharray="1 1.500"/>
            </svg>
            <div class="focus-cell"></div>
            <div class="red-mark"></div>
          </div>
        </div>
      </div>
    </div>
  </section>

  <div class="watermark">CSDN @Andy2Li</div>
</div>

<style>
  :global(body) {
    margin: 0;
    background: #fff;
  }

  .page {
    position: relative;
    display: flex;
    align-items: flex-start;
    height: 628px;
    width: 1522px;
    overflow: hidden;
    background: #fff;
    font-family: "Open Sans", "Noto Sans CJK SC", sans-serif;
  }

  .ico {
    display: block;
    flex: none;
  }

  /* ── NX window ─────────────────────────────── */
  .nx {
    width: 994px;
    height: 472px;
    margin: 20px 0 0 11px;
    overflow: hidden;
    display: flex;
    flex-direction: column;
    color: #444;
    font-size: 9px;
    filter: blur(0.35px);
  }

  .quick,
  .cmdbar {
    display: flex;
    align-items: center;
    flex: none;
    white-space: nowrap;
  }

  .quick {
    height: 23px;
    font-size: 8.2px;
  }

  .cmdbar {
    height: 24px;
    border-top: 2px solid #eee;
    border-bottom: 2px solid #c8c8c8;
    box-sizing: border-box;
    height: 26px;
    background: #fff;
    font-size: 9px;
  }

  .cell {
    display: flex;
    align-items: center;
    justify-content: center;
    flex: none;
    height: 18px;
  }

  .cell.sep {
    background: #ddd;
  }

  .cell.hl {
    background: #cce4ea;
  }

  .nx-logo {
    font: 700 15px "Liberation Sans", sans-serif;
    color: #7d93a6;
    letter-spacing: 0.3px;
  }

  .top-line {
    align-self: flex-start;
    margin: 2px 0 0 auto;
    width: 114px;
    height: 1px;
    background: linear-gradient(to right, #4a90c8 36px, #e4e4e4 36px);
  }

  .caret {
    display: block;
    width: 0;
    height: 0;
    border: 2.500px solid transparent;
    border-top: 3px solid #333;
    border-bottom: 0;
  }

  .sel-box {
    width: 100%;
    height: 15px;
    box-sizing: border-box;
    border: 1px solid #999;
    display: flex;
    align-items: center;
    justify-content: space-between;
    padding: 0 5px 0 2px;
    font-size: 9px;
  }

  .tabs {
    display: flex;
    flex: none;
    height: 21px;
    background: #d9d9d9;
    font-size: 9.800px;
    align-items: stretch;
  }

  .tab-file,
  .tab-home,
  .tab {
    display: flex;
    align-items: center;
    justify-content: center;
  }

  .tab-file {
    width: 61px;
    background: #559fb9;
    color: #fff;
  }

  .tab-home {
    width: 40px;
    margin-left: 1px;
    background: #fff;
    color: #2c8fb5;
    margin-right: 10px;
  }

  .tab {
    width: 20px;
    margin-right: 19.500px;
  }

  .tab-w1 {
    width: 40px;
  }

  .ribbon {
    display: flex;
    flex: none;
    height: 70px;
    background: #fff;
    overflow: hidden;
  }

  .group {
    flex: none;
    box-sizing: border-box;
    display: flex;
    flex-direction: column;
    border-right: 1px solid #e2e2e2;
    height: 66px;
    margin-top: 2px;
  }

  .g0 { width: 55px; }
  .g1 { width: 187px; }
  .g2 { width: 98px; }
  .g3 { width: 126px; }
  .g4 { width: 92px; }
  .g5 { width: 156px; }
  .g6 { width: 46px; }
  .g7 { width: 79px; }
  .g8 { width: 155px; border-right: 0; overflow: hidden; }

  .g-body {
    display: flex;
    height: 53px;
    position: relative;
  }

  .g-foot {
    position: relative;
    text-align: center;
    font-size: 8.800px;
    line-height: 12px;
    color: #2c8fb5;
    white-space: nowrap;
  }

  .g-caret {
    position: absolute;
    right: 6px;
    top: 5px;
  }

  .draft-foot {
    text-align: right;
    margin-right: -52px;
  }

  .big {
    flex: none;
    display: flex;
    flex-direction: column;
    align-items: center;
    padding-top: 2px;
  }

  .big-label {
    margin-top: 4px;
    font-size: 8.400px;
    line-height: 10px;
    white-space: nowrap;
    color: #333;
  }

  .big .caret {
    margin-top: 6px;
  }

  .w-new { width: 54px; }
  .w-wizard { width: 50px; margin-left: 10px; }
  .w-basic { width: 36px; margin-left: 6px; }
  .w-update { width: 38px; }
  .w-quick { width: 30px; margin-left: 5px; }
  .w-tbl { width: 44px; margin-left: 4px; }
  .w-parts { width: 44px; }
  .w-auto { width: 50px; margin-left: 5px; }
  .w-edit { width: 46px; }

  .small {
    display: grid;
    grid-auto-rows: 17px;
    flex: none;
  }

  .small > div {
    display: flex;
    align-items: center;
    justify-content: center;
  }

  .cols2 { grid-template-columns: repeat(2, 19px); margin-left: 4px; }
  .cols3 { grid-template-columns: repeat(3, 20px); }
  .cols4 { grid-template-columns: repeat(4, 19px); }
  .cols4s { grid-template-columns: repeat(4, 17.500px); }

  .note-caret {
    margin: 6px 0 0 2px;
  }

  .sketch {
    margin: 2px 0 0 6px;
    width: 70px;
    height: 51px;
    box-sizing: border-box;
    border: 1px solid #ddd;
  }

  .scroller {
    display: flex;
    flex-direction: column;
    align-items: center;
    justify-content: space-between;
    width: 12px;
    height: 38px;
    margin: 8px 0 0 0;
  }

  .scroller .up {
    width: 0;
    border: 2.500px solid transparent;
    border-bottom: 3px solid #ccc;
    border-top: 0;
  }

  .scroller .more {
    width: 6px;
    height: 4px;
    border-top: 1px solid #333;
    background: linear-gradient(#333, #333) center / 1px 3px no-repeat;
  }

  .wide {
    grid-template-columns: repeat(4, 18px);
    grid-auto-rows: 23px;
    margin: 3px 0 0 3px;
  }

  .draft {
    flex-direction: column;
    padding-top: 3px;
    height: 50px;
  }

  .draft-row {
    display: flex;
    height: 23px;
    align-items: center;
    gap: 3px;
    margin-left: 4px;
  }

  .draft-row > div {
    width: 15px;
  }

  .draft-row.tight {
    gap: 2.400px;
  }

  /* ── Work area ─────────────────────────────── */
  .work {
    display: flex;
    flex: 1;
    min-height: 0;
  }

  .rail {
    width: 24px;
    flex: none;
    background: #e1e1e1;
    border-right: 1px solid #c8c8c8;
    box-sizing: border-box;
  }

  .rail-gear {
    height: 31px;
    display: flex;
    align-items: center;
    justify-content: center;
  }

  .rail-item {
    display: flex;
    align-items: center;
    justify-content: center;
    overflow: visible;
  }

  .rail-item.active {
    background: #fff;
    margin: 0 -1px 0 1px;
  }

  .nav {
    width: 643px;
    flex: none;
    background: #fff;
    display: flex;
    flex-direction: column;
    border-right: 1px solid #d8d8d8;
    box-sizing: border-box;
  }

  .nav-title {
    height: 22px;
    flex: none;
    display: flex;
    align-items: center;
    justify-content: space-between;
    padding: 0 5px 0 8px;
  }

  .max-box {
    width: 7px;
    height: 7px;
    border: 1px solid #333;
    border-top-width: 2px;
  }

  .nav-table {
    margin-left: 6px;
    flex: 1;
    min-height: 0;
    overflow: hidden;
    border-left: 1px solid #e4e4e4;
  }

  .nav-row {
    display: grid;
    grid-template-columns: 182px 75px 76px 76px 1fr;
    height: 15.200px;
    box-sizing: border-box;
    border-bottom: 1px solid #eee;
    line-height: 14px;
    font-size: 9px;
  }

  .nav-row:nth-child(even) {
    background: #fafafa;
  }

  .nav-row.bold {
    font-weight: 700;
  }

  .nav-head {
    height: 17px;
    background: #f3f3f3;
    border-bottom: 2px solid #ddd;
    font-size: 9.200px;
    line-height: 15px;
  }

  .nc {
    border-right: 1px solid #e8e8e8;
    padding-left: 3px;
    display: flex;
    align-items: center;
    white-space: nowrap;
    min-width: 0;
  }

  .nc.last {
    border-right: 0;
  }

  .nav-head .nc {
    border-right: 1px solid #ddd;
    padding-left: 4px;
  }

  .name-head .sort {
    margin-left: 12px;
  }

  .sort {
    width: 0;
    height: 0;
    border: 3.500px solid transparent;
    border-bottom: 4px solid #222;
    border-top: 0;
  }

  .nav-body {
    position: relative;
  }

  .tree-cell {
    padding: 0;
  }

  .part {
    display: flex;
    flex: none;
    align-items: center;
    justify-content: center;
  }

  .tree-sel {
    flex: 1;
    align-self: stretch;
    background: #8ac1d1;
    padding-left: 1px;
    margin-right: -1px;
  }

  .selbg {
    background: #8ac1d1;
    border-right-color: #8ac1d1;
  }

  .ok-cell {
    padding-left: 4px;
  }

  .tree-lines {
    position: absolute;
    left: 0;
    top: 0;
    pointer-events: none;
    z-index: 0;
  }

  .view {
    flex: 1;
    margin-left: 8px;
    min-width: 0;
    display: flex;
    flex-direction: column;
  }

  .view-tabs {
    height: 17px;
    flex: none;
    background: #fff;
  }

  .view-tab {
    width: 122px;
    height: 17px;
    background: #559fb9;
    color: #fff;
    display: flex;
    align-items: center;
    gap: 4px;
    padding-left: 4px;
    box-sizing: border-box;
    font-size: 9.300px;
    white-space: nowrap;
  }

  .canvas {
    position: relative;
    flex: 1;
    background: #d2d3d5;
    border-top: 1px solid #eeb070;
    border-left: 1px solid #eeb070;
    overflow: hidden;
  }

  .sheet-drawing {
    position: absolute;
    left: 0;
    top: 0;
  }

  /* ── Dialog ────────────────────────────────── */
  .dialog {
    width: 512px;
    height: 590px;
    margin-top: 18px;
    padding: 13px 6px 0 13px;
    box-sizing: border-box;
    background: #d2d3d5;
    overflow: hidden;
    color: #222;
    font-size: 18px;
    filter: blur(0.3px);
    flex: none;
  }

  .dlg-title {
    height: 36px;
    background: #559dba;
    display: flex;
    align-items: center;
    gap: 13px;
    padding: 0 14px 0 11px;
    color: #fff;
  }

  .dlg-title h1 {
    margin: 0;
    flex: 1;
    font-size: 21px;
    font-weight: 400;
    line-height: 36px;
    padding-top: 2px;
  }

  .reset {
    margin-right: -1px;
  }

  .dlg-body {
    margin: 0 1px 0 2px;
    padding: 7px 8px 0 7px;
    background: #f0f0f0;
    display: flex;
    flex-direction: column;
    gap: 6px;
    height: 560px;
    box-sizing: border-box;
  }

  .sec {
    background: #fff;
    box-sizing: border-box;
    border-bottom: 2px solid #cfcfcf;
    flex: none;
  }

  .sec-find { height: 105px; }
  .sec-work { height: 91px; }
  .sec-layers { flex: 1; border-bottom: 0; min-height: 0; }

  .sec-head {
    height: 38px;
    display: flex;
    align-items: center;
    justify-content: space-between;
    padding: 0 9px 0 11px;
    margin-bottom: 7px;
  }

  .sec-head h2 {
    margin: 0;
    font-size: 21px;
    font-weight: 400;
    color: #14708f;
    line-height: 38px;
  }

  .pick {
    display: flex;
    height: 47px;
    margin: 0 14px;
    gap: 3px;
  }

  .pick-label {
    flex: 1;
    background: #ffdf75;
    display: flex;
    align-items: center;
  }

  .pick-btn {
    width: 48px;
    background: #ffdf75;
    display: flex;
    align-items: center;
    justify-content: center;
  }

  .field {
    display: flex;
    align-items: center;
    justify-content: space-between;
    height: 34px;
    margin: 0 14px;
  }

  .field label {
    font-size: 18px;
  }

  .indent {
    padding-left: 3px;
  }

  .num {
    width: 123px;
    height: 34px;
    box-sizing: border-box;
    border: 2px solid #aeaeae;
    background: #fff;
    text-align: right;
    padding: 2px 9px 0 0;
    margin: 0;
    font: 21px "DejaVu Sans", sans-serif;
    color: #222;
    outline: none;
  }

  .check-row {
    display: flex;
    align-items: center;
    gap: 8px;
    margin: 10px 14px 0;
    height: 20px;
  }

  .box {
    display: inline-flex;
    align-items: center;
    justify-content: center;
    box-sizing: border-box;
    width: 19px;
    height: 19px;
    border: 2px solid #222;
    background: #fff;
    flex: none;
  }

  .filter-row {
    display: flex;
    align-items: center;
    justify-content: space-between;
    margin: 8px 14px 0;
    height: 37px;
  }

  .muted {
    color: #c4c4c4;
  }

  .combo {
    position: relative;
    width: 211px;
    height: 37px;
    box-sizing: border-box;
    border: 2px solid #dcdcdc;
    background: #fdfdfd;
    padding-left: 6px;
    color: #888;
    line-height: 26px;
  }

  .combo-arrow {
    position: absolute;
    right: 8px;
    top: 14px;
    border: 6px solid transparent;
    border-top: 7px solid #aaa;
    border-bottom: 0;
  }

  .grid-frame {
    margin: 4px 14px 0;
    border: 1px solid #cfcfcf;
    padding: 2px 2px 0;
    height: 170px;
    overflow: hidden;
  }

  .lrow {
    display: grid;
    grid-template-columns: 225px 127px 1fr;
    height: 30px;
    box-sizing: border-box;
    border-bottom: 2px solid #f0f0f0;
  }

  .lhead {
    height: 31px;
    background: #f0f0f0;
    border-bottom: 2px solid #d4d4d4;
    color: #333;
  }

  .lhead .lc {
    border-right: 2px solid #d4d4d4;
    padding-left: 9px;
  }

  .lhead .lc:last-child {
    border-right: 0;
  }

  .lhead .name {
    padding-left: 9px;
  }

  .lhead .sort {
    margin-left: 27px;
  }

  .sort.lg {
    border-width: 7px;
    border-bottom-width: 7px;
    border-top: 0;
  }

  .lbody {
    position: relative;
  }

  .lbody .lrow:nth-child(even) {
    background: #fafafa;
  }

  .lc {
    display: flex;
    align-items: center;
    padding-left: 9px;
    border-right: 2px solid #f0f0f0;
    min-width: 0;
    line-height: 1;
  }

  .lc:last-child {
    border-right: 0;
  }

  .lbody .name {
    border-right: 2px solid #111;
    padding-left: 0;
  }

  .work-name {
    gap: 5px;
    padding-left: 28px !important;
  }

  .layer-name {
    gap: 7px;
    padding-left: 32px !important;
  }

  .box.checked svg {
    display: block;
  }

  .small-box {
    width: 18px;
    height: 18px;
  }

  .layer-lines {
    position: absolute;
    left: 0;
    top: 0;
  }

  .focus-cell {
    position: absolute;
    left: 54px;
    right: 1px;
    top: 59px;
    height: 30px;
    box-sizing: border-box;
    border: 2px dotted #222;
    border-right: 0;
  }

  .red-mark {
    position: absolute;
    left: 15px;
    top: 60px;
    width: 112px;
    height: 63px;
    box-sizing: border-box;
    border: 4px solid #e60000;
  }

  .watermark {
    position: absolute;
    right: 15px;
    top: 604px;
    font: 12px "Liberation Sans", sans-serif;
    color: #999;
  }
</style>
